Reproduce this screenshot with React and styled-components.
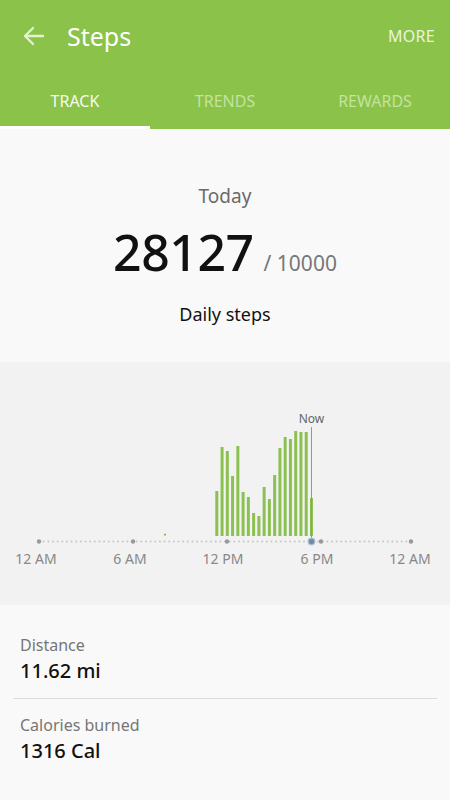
import React from 'react'
import styled, { createGlobalStyle } from 'styled-components'

const GlobalStyle = createGlobalStyle`
body {
  margin: 0;
  background: #f9f9f9;
  font-family: "Noto Sans", "DejaVu Sans", sans-serif;
}
* { box-sizing: border-box; }
`

const GREEN = '#8bc24a'

const Page = styled.div`
width: 450px;
min-height: 800px;
background: #f9f9f9;
`

const Header = styled.header`
background: ${GREEN};
`

const TopBar = styled.div`
height: 72px;
display: flex;
align-items: center;
padding: 0 15px 0 23px;
`

const Title = styled.h1`
margin: 0 0 0 22px;
font-size: 25px;
font-weight: 400;
color: #ffffff;
`

const More = styled.span`
margin-left: auto;
font-size: 16px;
color: #e9f5da;
letter-spacing: 0.3px;
`

const Tabs = styled.nav`
display: grid;
grid-template-columns: repeat(3, 1fr);
height: 57px;
`

const Tab = styled.div`
display: flex;
align-items: center;
justify-content: center;
padding-top: 4px;
font-size: 16px;
color: ${p => (p.$active ? '#f6fbee' : '#c3e39f')};
border-bottom: 3px solid ${p => (p.$active ? '#ffffff' : 'transparent')};
`

const Summary = styled.section`
height: 233px;
padding-top: 55px;
display: flex;
flex-direction: column;
align-items: center;
background: #f9f9f9;
`

const Today = styled.div`
font-size: 19px;
line-height: 24px;
color: #6a6a6a;
`

const CountRow = styled.div`
margin-top: 16px;
display: flex;
align-items: baseline;
line-height: 56px;
`

const Count = styled.span`
font-size: 50px;
font-weight: 500;
color: #111;
letter-spacing: -0.5px;
`

const Goal = styled.span`
margin-left: 10px;
font-size: 21px;
color: #777;
`

const Caption = styled.div`
margin-top: 11px;
font-size: 18px;
line-height: 24px;
color: #111;
`

const ChartSection = styled.section`
height: 243px;
background: #f2f2f2;
`

const Stats = styled.section`
background: #f9f9f9;
`

const StatRow = styled.div`
padding: ${p => (p.$first ? '29px' : '15px')} 20px 13px;
`

const Divider = styled.hr`
margin: 0 13px;
border: none;
border-top: 1px solid #dcdcdc;
`

const StatLabel = styled.div`
font-size: 16px;
line-height: 22px;
color: #767676;
`

const StatValue = styled.div`
margin-top: 1px;
font-size: 20px;
line-height: 28px;
font-weight: 500;
color: #111;
`

const BackArrow = () => (
  <svg width="22" height="20" viewBox="0 0 22 20" fill="none" stroke="#e3f2cf" strokeWidth="2.4" strokeLinecap="round" strokeLinejoin="round">
    <path d="M20 10H2.5" />
    <path d="M10 2L2 10l8 8" />
  </svg>
)

const heights = [45, 89, 85, 60, 90, 44, 39, 23, 20, 49, 37, 61, 88, 99, 97, 105, 104, 104, 38]
const majors = [39, 133, 227, 321, 411]
const labels = [
  { x: 36, t: '12 AM' },
  { x: 130, t: '6 AM' },
  { x: 223, t: '12 PM' },
  { x: 317, t: '6 PM' },
  { x: 410, t: '12 AM' },
]

const StepChart = () => {
  const base = 174
  const axis = 179.5
  const dots = []
  for (let x = 39; x <= 411; x += 4.65) dots.push(x)
  return (
    <svg width="450" height="243" viewBox="0 0 450 243">
      {dots.map((x, i) => (
        <circle key={i} cx={x} cy={axis} r="1" fill="#c6c6c6" />
      ))}
      {majors.map(x => (
        <circle key={x} cx={x} cy={axis} r="2.2" fill="#9a9a9a" />
      ))}
      <circle cx="165" cy="172.7" r="1.1" fill="#8cc152" />
      {heights.map((h, i) => (
        <rect key={i} x={215.3 + i * 5.26} y={base - h} width="3" height={h} fill="#8cc152" />
      ))}
      <line x1="311.5" y1="65" x2="311.5" y2={axis} stroke="#8a98aa" strokeWidth="1" />
      <circle cx="311.5" cy={axis} r="3.4" fill="#6e8da7" stroke="#b4c4d2" strokeWidth="1.2" />
      <text x="311.5" y="61" textAnchor="middle" fontSize="12" fill="#666" fontFamily="Noto Sans, sans-serif">Now</text>
      {labels.map(l => (
        <text key={l.x} x={l.x} y="202" textAnchor="middle" fontSize="14" fill="#888" fontFamily="Noto Sans, sans-serif">{l.t}</text>
      ))}
    </svg>
  )
}

export default function App() {
  return (
    <Page>
      <GlobalStyle />
      <Header>
        <TopBar>
          <BackArrow />
          <Title>Steps</Title>
          <More>MORE</More>
        </TopBar>
        <Tabs>
          <Tab $active>TRACK</Tab>
          <Tab>TRENDS</Tab>
          <Tab>REWARDS</Tab>
        </Tabs>
      </Header>

      <Summary>
        <Today>Today</Today>
        <CountRow>
          <Count>28127</Count>
          <Goal>/ 10000</Goal>
        </CountRow>
        <Caption>Daily steps</Caption>
      </Summary>

      <ChartSection>
        <StepChart />
      </ChartSection>

      <Stats>
        <StatRow $first>
          <StatLabel>Distance</StatLabel>
          <StatValue>11.62 mi</StatValue>
        </StatRow>
        <Divider />
        <StatRow>
          <StatLabel>Calories burned</StatLabel>
          <StatValue>1316 Cal</StatValue>
        </StatRow>
      </Stats>
    </Page>
  )
}
